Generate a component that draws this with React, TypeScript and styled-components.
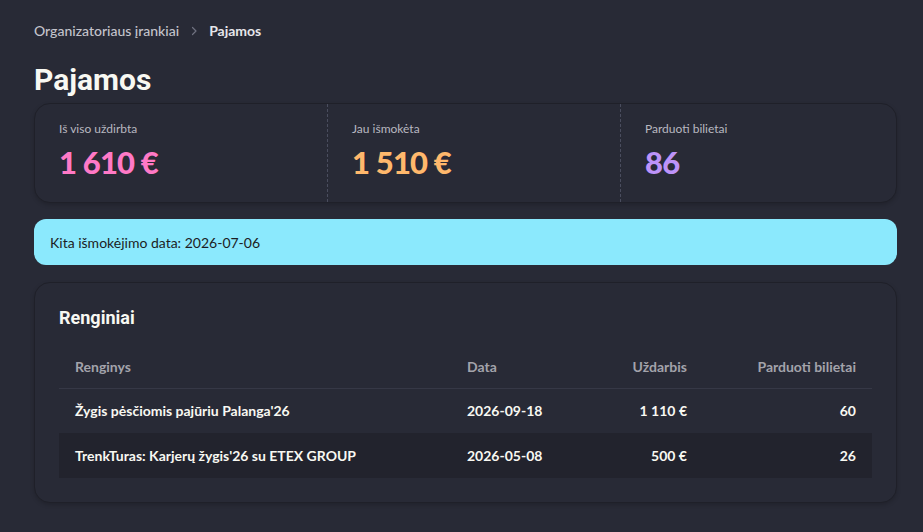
import React from "react";
import styled, { createGlobalStyle } from "styled-components";

const Global = createGlobalStyle`
  html, body { margin: 0; padding: 0; background: #282a36; }
  body { font-family: "Lato", "Noto Sans", sans-serif; color: #f8f8f2; }
  * { box-sizing: border-box; }
`;

const Page = styled.div`
  padding: 21px 26px 30px 34px;
  display: flex;
  flex-direction: column;
`;

const Breadcrumb = styled.nav`
  display: flex;
  align-items: center;
  gap: 11px;
  font-size: 14px;
  line-height: 20px;
  color: #c4c4cc;
`;

const Crumb = styled.span<{ $current?: boolean }>`
  font-weight: ${(p) => (p.$current ? 700 : 500)};
  color: ${(p) => (p.$current ? "#e6e6ea" : "#c4c4cc")};
`;

const Sep = styled.span`
  display: flex;
  align-items: center;
`;

const Title = styled.h1`
  margin: 22px 0 6px;
  font-family: "Roboto", "Noto Sans", sans-serif;
  font-weight: 700;
  font-size: 30px;
  line-height: 34px;
  color: #f8f8f2;
`;

const Card = styled.section`
  background: #282a36;
  border: 1px solid #1f2029;
  border-radius: 16px;
  box-shadow: 0 2px 4px rgba(0, 0, 0, 0.18);
`;

const Stats = styled(Card)`
  display: grid;
  grid-template-columns: 292px 293px 1fr;
`;

const Stat = styled.div`
  padding: 17px 24px 22px;
  & + & { border-left: 1px dashed #4a4d5e; }
`;

const StatLabel = styled.div`
  font-size: 12px;
  line-height: 16px;
  color: #b8b8c0;
`;

const StatValue = styled.div<{ $color: string }>`
  margin-top: 7px;
  font-size: 31px;
  line-height: 36px;
  font-weight: 900;
  letter-spacing: -0.8px;
  color: ${(p) => p.$color};
`;

const Alert = styled.div`
  margin-top: 16px;
  background: #8be9fd;
  color: #1c1d24;
  border-radius: 12px;
  height: 46px;
  display: flex;
  align-items: center;
  padding: 0 16px;
  font-size: 14px;
`;

const TableCard = styled(Card)`
  margin-top: 17px;
  padding: 23px 24px 24px;
`;

const CardTitle = styled.h2`
  margin: 0 0 15px;
  font-family: "Roboto", "Noto Sans", sans-serif;
  font-weight: 700;
  font-size: 18px;
  line-height: 24px;
  color: #f8f8f2;
`;

const Table = styled.table`
  width: 100%;
  border-collapse: collapse;
  font-size: 14px;
`;

const Th = styled.th<{ $right?: boolean; $w?: string }>`
  text-align: ${(p) => (p.$right ? "right" : "left")};
  width: ${(p) => p.$w || "auto"};
  height: 43px;
  padding: 0 16px;
  color: #a3a3ab;
  font-weight: 700;
  border-bottom: 1px solid #363846;
`;

const Tr = styled.tr<{ $alt?: boolean }>`
  background: ${(p) => (p.$alt ? "#22232d" : "transparent")};
  & + & td { border-top: 1px solid #363846; }
`;

const Td = styled.td<{ $right?: boolean }>`
  text-align: ${(p) => (p.$right ? "right" : "left")};
  height: 45px;
  padding: 0 16px;
  font-weight: 700;
  color: #f8f8f2;
`;

const rows = [
  { name: "Žygis pėsčiomis pajūriu Palanga'26", date: "2026-09-18", earn: "1 110 €", sold: "60" },
  { name: "TrenkTuras: Karjerų žygis'26 su ETEX GROUP", date: "2026-05-08", earn: "500 €", sold: "26" },
];

export default function App() {
  return (
    <>
      <Global />
      <Page>
        <Breadcrumb>
          <Crumb>Organizatoriaus įrankiai</Crumb>
          <Sep>
            <svg width="8" height="10" viewBox="0 0 8 10" fill="none">
              <path d="M2.5 1.5 L6 5 L2.5 8.5" stroke="#6f7180" strokeWidth="1.2" strokeLinecap="round" strokeLinejoin="round" />
            </svg>
          </Sep>
          <Crumb $current>Pajamos</Crumb>
        </Breadcrumb>
        <Title>Pajamos</Title>
        <Stats>
          <Stat>
            <StatLabel>Iš viso uždirbta</StatLabel>
            <StatValue $color="#ff79c6">1 610 €</StatValue>
          </Stat>
          <Stat>
            <StatLabel>Jau išmokėta</StatLabel>
            <StatValue $color="#ffb86c">1 510 €</StatValue>
          </Stat>
          <Stat>
            <StatLabel>Parduoti bilietai</StatLabel>
            <StatValue $color="#bd93f9">86</StatValue>
          </Stat>
        </Stats>
        <Alert>Kita išmokėjimo data: 2026-07-06</Alert>
        <TableCard>
          <CardTitle>Renginiai</CardTitle>
          <Table>
            <thead>
              <tr>
                <Th $w="392px">Renginys</Th>
                <Th>Data</Th>
                <Th $right>Uždarbis</Th>
                <Th $right $w="169px">Parduoti bilietai</Th>
              </tr>
            </thead>
            <tbody>
              {rows.map((r, i) => (
                <Tr key={r.date} $alt={i % 2 === 1}>
                  <Td>{r.name}</Td>
                  <Td>{r.date}</Td>
                  <Td $right>{r.earn}</Td>
                  <Td $right>{r.sold}</Td>
                </Tr>
              ))}
            </tbody>
          </Table>
        </TableCard>
      </Page>
    </>
  );
}
